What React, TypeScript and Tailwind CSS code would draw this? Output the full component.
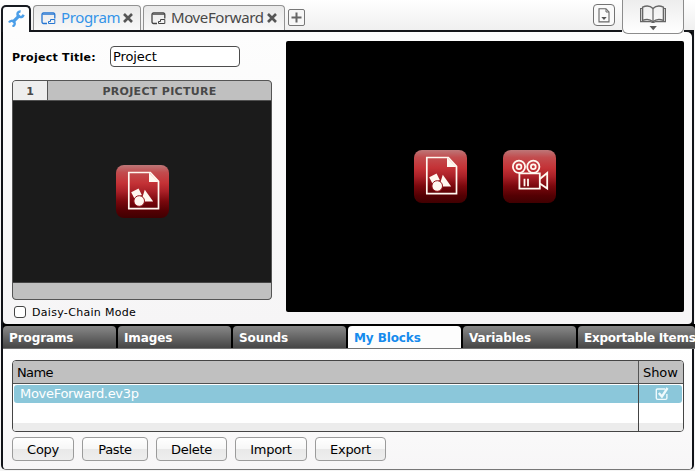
import React from "react";

const verdana = "font-['DejaVu_Sans',Verdana,sans-serif]";

function ProgramIcon({ className }: { className: string }) {
  return (
    <svg width="15" height="13" viewBox="0 0 15 13" className={`shrink-0 ${className}`} fill="none" stroke="currentColor">
      <path d="M6 11.5H2.5A1.5 1.5 0 0 1 1 10V2.5A1.5 1.5 0 0 1 2.5 1h9.8a1.5 1.5 0 0 1 1.5 1.5v4" strokeWidth="1.3" />
      <path d="M1.5 2.5h12" strokeWidth="1" opacity=".75" />
      <path d="M7.5 11.5V9.5h2V7.5h4.3v4z" strokeWidth="1" />
    </svg>
  );
}

function CloseIcon() {
  return (
    <svg width="10" height="10" viewBox="0 0 10 10" className="shrink-0 text-[#555]" stroke="currentColor" strokeWidth="2.6">
      <path d="M1 1l8 8M9 1L1 9" />
    </svg>
  );
}

function MediaButton({ kind }: { kind: "picture" | "video" }) {
  return (
    <div className="size-[53px] shrink-0 rounded-[8px] bg-[linear-gradient(to_bottom,#bd7778_0%,#c24c4e_14%,#c43236_34%,#a92027_50%,#7a080d_68%,#540003_86%,#400001_100%)]">
      {kind === "picture" ? (
        <svg width="53" height="53" viewBox="0 0 53 53" fill="none">
          <path d="M12.8 7.5h21.5l8.2 8.8v27.4H12.8z" stroke="#fff8f0" strokeWidth="1.7" />
          <path d="M33 7.5l9.5 9.6H33z" fill="#fff8f0" />
          <path d="M15.2 27.2l7.4-3.6 3.2 6.4-7.4 3.6z" fill="#fff8f0" />
          <path d="M28.8 24.8l8.4 11.6H25z" fill="#fff8f0" />
          <circle cx="23.2" cy="36" r="5.3" fill="#fff8f0" stroke="#931319" strokeWidth="1" />
        </svg>
      ) : (
        <svg width="53" height="53" viewBox="0 0 53 53" fill="none" stroke="#fff8f0">
          <circle cx="16" cy="16.8" r="6.1" strokeWidth="1.8" />
          <circle cx="16" cy="16.8" r="2.4" strokeWidth="1.8" />
          <circle cx="30.3" cy="16.8" r="6.1" strokeWidth="1.8" />
          <circle cx="30.3" cy="16.8" r="2.4" strokeWidth="1.8" />
          <path d="M16.4 23.4h20.4v15.2H16.4z" strokeWidth="1.8" />
          <path d="M36.8 29l7.4-6v15.6l-7.4-5.2" strokeWidth="1.8" />
          <path d="M21.5 28.8v7.4M25 28.8v7.4" strokeWidth="1.8" />
        </svg>
      )}
    </div>
  );
}

function Header() {
  const tab = "flex h-[25px] items-center rounded-t-[4px] border border-b-0 border-[#929292] bg-linear-to-b from-[#e9e9e9] to-[#f8f8f8] text-[15px] font-['Noto_Sans',sans-serif]";
  return (
    <header className="relative z-10 flex h-[32px] shrink-0 items-start bg-linear-to-b from-white via-[#f7f7f7] to-[#efefef] pl-px">
      <div className="mt-[5px] flex h-[27px] w-[30px] shrink-0 justify-center rounded-t-[5px] border-x-2 border-t-2 border-[#171a20] bg-[#fdfdfd] pt-[3px]">
        <svg width="17" height="17" viewBox="0 0 17 17" fill="none" stroke="#4b9ee8">
          <path d="M4.6 12.4L11.8 5.2" strokeWidth="3.2" />
          <path d="M12.6 1.5C10.3 1.2 9 3.3 9.7 5.3c.7 2.2 4.6 2.8 5.9-.6" strokeWidth="2.4" />
          <path d="M1 12.5c1-2 3.8-2.4 5.2-.6 1.2 1.8.3 4.1-1.8 4.3" strokeWidth="2.3" />
        </svg>
      </div>
      <div className="flex h-[32px] w-[591px] shrink-0 items-start border-b-2 border-[#15171b] pl-[2px]">
        <div className={`${tab} mt-[5px] w-[108px] pl-[7px]`}>
          <ProgramIcon className="text-[#2576d2]" />
          <span className="relative -top-px ml-[5px] w-[62px] tracking-[-0.35px] text-[#3594e8]">Program</span>
          <CloseIcon />
        </div>
        <div className={`${tab} ml-[2px] mt-[5px] w-[142px] pl-[7px]`}>
          <ProgramIcon className="text-[#444]" />
          <span className="relative -top-px ml-[5px] w-[96px] tracking-[-0.38px] text-[#484848]">MoveForward</span>
          <CloseIcon />
        </div>
        <div className="ml-[3px] mt-[9px] flex size-[17px] items-center justify-center rounded-[2px] border border-[#777] bg-[#f7f7f7]">
          <svg width="11" height="11" viewBox="0 0 11 11" stroke="#666" strokeWidth="2"><path d="M5.5 .5v10M.5 5.5h10" /></svg>
        </div>
        <div className="ml-auto mr-[7px] mt-[4px] flex size-[22px] items-center justify-center rounded-[4px] border border-[#737373] bg-[#fafafa]">
          <svg width="12" height="15" viewBox="0 0 12 15" fill="none" stroke="#666">
            <path d="M1 .7h7l3 3.2v10H1z" strokeWidth="1.1" />
            <path d="M8 1v3h3" />
            <path d="M3.3 9h5.4L6 12z" fill="#555" stroke="none" />
          </svg>
        </div>
      </div>
      <div className="flex h-[34px] w-[62px] shrink-0 flex-col items-center rounded-b-[6px] border border-t-0 border-[#8c8c8c] bg-linear-to-b from-[#ededed] to-white pt-[5px]">
        <svg width="28" height="26" viewBox="0 0 28 26" fill="none" stroke="#666">
          <path d="M14 3.6C11.4.9 7.2.6 3.6 2.1v13.2c3.6-1.3 7.8-1 10.4 1.5 2.6-2.5 6.8-2.8 10.4-1.5V2.1C20.8.6 16.6.9 14 3.6z" strokeWidth="1.4" />
          <path d="M14 3.6v13M3.5 3.5H1.6v13.2h9.8c.8 0 1.2.8 2.6.8s1.8-.8 2.6-.8h9.8V3.5h-1.9" strokeWidth="1.2" />
          <path d="M10.5 21h7.4L14.2 25.2z" fill="#5a5a5a" stroke="none" />
        </svg>
      </div>
      <div className="h-[32px] w-[10px] shrink-0 border-b-2 border-[#15171b]" />
    </header>
  );
}

const categories = ["Programs", "Images", "Sounds", "My Blocks", "Variables", "Exportable Items"];

function Categories() {
  return (
    <nav className="-mr-[3px] flex h-[25px] shrink-0 gap-[2px] border-b border-b-[#737373] bg-black pt-[2px] text-[12px] font-bold">
      {categories.map((name) => (
        <div
          key={name}
          className={`flex shrink-0 items-center whitespace-nowrap rounded-t-[4px] pl-[6px] ${name === "Exportable Items" ? "w-[117px] tracking-[-0.25px]" : "w-[113px] tracking-[-0.1px]"} ${
            name === "My Blocks" ? "bg-[#fdfdfd] text-[#168bed]" : "bg-linear-to-b from-[#898989] to-[#464646] text-white"
          }`}
        >
          <span className="relative top-px">{name}</span>
        </div>
      ))}
    </nav>
  );
}

const actions = [
  { name: "Copy", width: "w-[62px]" },
  { name: "Paste", width: "w-[66px]" },
  { name: "Delete", width: "w-[71px]" },
  { name: "Import", width: "w-[72px]" },
  { name: "Export", width: "w-[71px]" },
];

export default function App() {
  return (
    <div className={`flex h-[471px] w-[695px] flex-col overflow-hidden bg-[#f4f4f4] text-[12px] leading-none text-black ${verdana}`}>
      <Header />
      <div className="ml-px flex h-[438px] w-[693px] flex-col rounded-b-[5px] border-x-2 border-b border-b-[#777] border-x-[#111318] bg-[#f8f7f8]">
        <div className="h-[292px] shrink-0 bg-black">
          <main className="flex h-[292px] rounded-tr-[5px] rounded-b-[4px] bg-linear-to-b from-[#fdfdfd] to-[#f6f5f6]">
            <section className="ml-[9px] w-[260px] shrink-0">
              <div className="mt-[14px] flex h-[21px] items-center">
                <label className="w-[98px] pt-px text-[11px] font-bold tracking-[0.28px]">Project Title:</label>
                <div className="flex h-[21px] w-[130px] items-center rounded-[4px] border border-[#4d4d4d] bg-white px-[2px] text-[13px] tracking-[-0.1px]">Project</div>
              </div>
              <div className="mt-[13px] flex h-[220px] flex-col overflow-hidden rounded-[4px] border border-[#555] bg-[#1b1b1b]">
                <div className="flex h-[20px] shrink-0 border-b border-[#505050] bg-[#c0c0c0] text-[11px] font-bold text-[#484848]">
                  <div className="flex w-[35px] items-center justify-center border-r border-[#555] bg-[#eee] pt-px">1</div>
                  <div className="flex flex-1 items-center justify-center pt-px tracking-[0.31px]">PROJECT PICTURE</div>
                </div>
                <div className="flex flex-1 items-center justify-center"><MediaButton kind="picture" /></div>
                <div className="h-[17px] shrink-0 border-t border-[#444] bg-[#c0c0c0]" />
              </div>
              <div className="mt-[6px] flex h-[12px] items-center">
                <div className="ml-[2px] size-[12px] rounded-[3px] border border-[#444] bg-white" />
                <span className="ml-[6px] text-[11px] tracking-[0.31px]">Daisy-Chain Mode</span>
              </div>
            </section>
            <section className="ml-[14px] mt-[9px] flex h-[271px] w-[398px] justify-center gap-[36px] rounded-[2px] bg-black pt-[109px]">
              <MediaButton kind="picture" />
              <MediaButton kind="video" />
            </section>
          </main>
        </div>
        <Categories />
        <section className="flex flex-1 flex-col rounded-b-[4px] bg-linear-to-b from-white to-[#f7f6f7] pl-[9px]">
          <div className="mt-[11px] flex h-[72px] w-[672px] flex-col overflow-hidden rounded-[4px] border border-[#454545] bg-white text-[13px]">
            <div className="flex h-[23px] shrink-0 border-b border-[#505050] bg-[#c0c0c0]">
              <div className="flex w-[625px] items-center pl-[4px] tracking-[-0.6px]">Name</div>
              <div className="flex flex-1 items-center border-l border-[#555] pl-[4px] tracking-[-0.1px]">Show</div>
            </div>
            <div className="flex flex-1">
              <div className="w-[625px] pl-px pt-px">
                <div className="flex h-[18px] items-center rounded-l-[3px] bg-[#8bc7da] pb-[2px] pl-[6px] tracking-[-0.3px] text-white">MoveForward.ev3p</div>
              </div>
              <div className="flex-1 border-l border-[#444] pr-px pt-px">
                <div className="flex h-[18px] items-center rounded-r-[3px] bg-[#8bc7da] pb-px pl-[16px]">
                  <svg width="14" height="14" viewBox="0 0 14 14" fill="none" stroke="#effafc">
                    <path d="M10 2H2.5Q1.3 2 1.3 3.2v7.8q0 1.4 1.4 1.4h7.8q1.4 0 1.4-1.4V7" strokeWidth="1.4" />
                    <path d="M3.8 6l3.1 3.6L12.5 1" strokeWidth="2.4" />
                  </svg>
                </div>
              </div>
            </div>
            <div className="flex h-[8px] shrink-0 bg-[#ececec]">
              <div className="w-[625px]" />
              <div className="border-l border-[#444]" />
            </div>
          </div>
          <div className="mt-[5px] flex gap-[8px]">
            {actions.map((action) => (
              <button key={action.name} className={`${action.width} h-[24px] rounded-[4px] border border-[#9b9b9b] bg-[linear-gradient(to_bottom,#fff_0%,#f7f7f7_48%,#e9e9e9_50%,#eeeeee_100%)] text-[13px] tracking-[-0.3px]`}>
                {action.name}
              </button>
            ))}
          </div>
        </section>
      </div>
    </div>
  );
}
